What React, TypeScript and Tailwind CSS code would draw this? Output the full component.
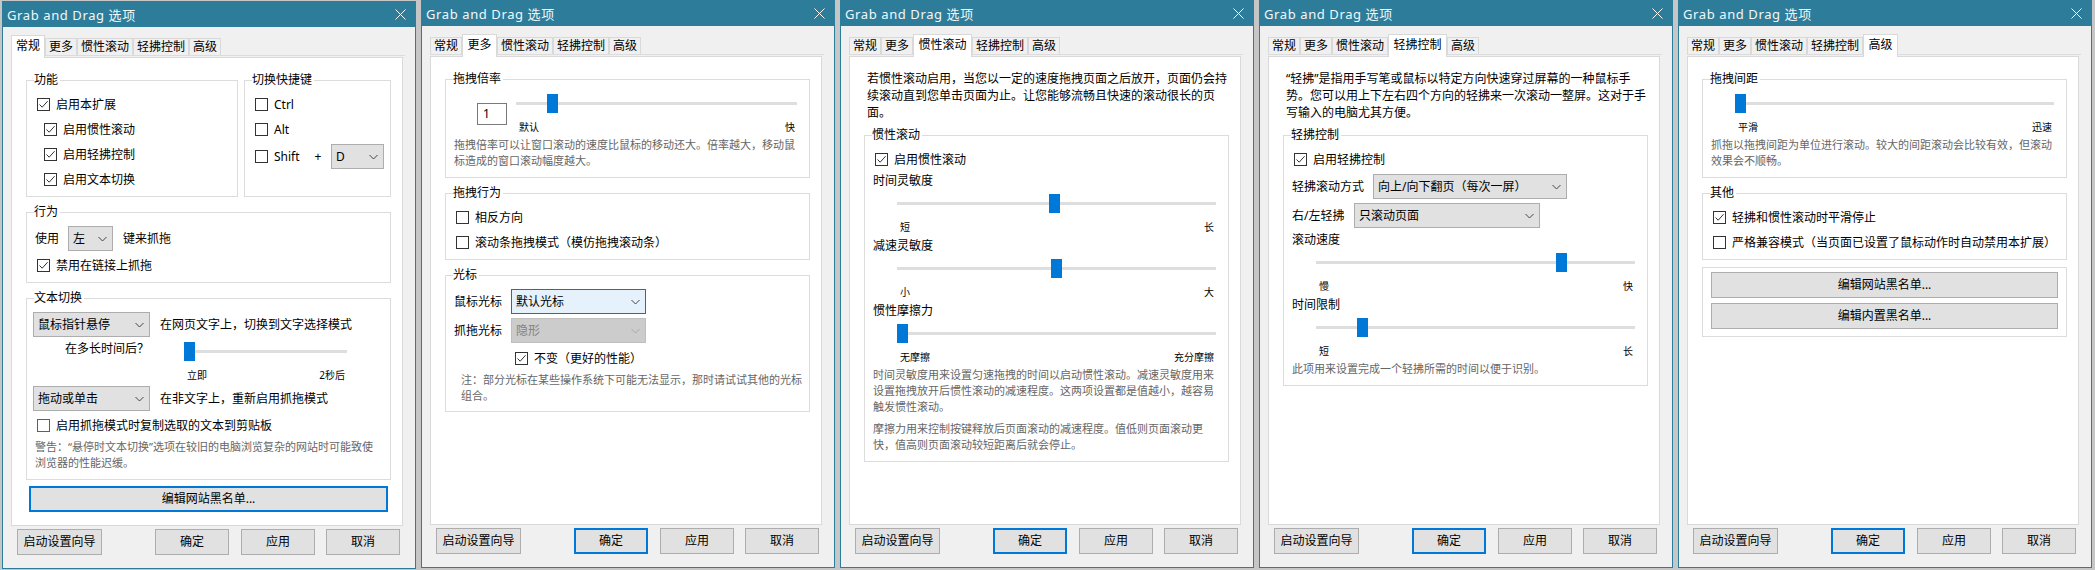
import type { ReactNode } from "react";

const TABS = [
  { name: "常规", width: 32 },
  { name: "更多", width: 32 },
  { name: "惯性滚动", width: 56 },
  { name: "轻拂控制", width: 56 },
  { name: "高级", width: 32 },
];

function CheckBox({ label, checked, focus, className = "" }: { label: string; checked?: boolean; focus?: boolean; className?: string }) {
  return (
    <div className={`flex items-center ${className}`}>
      <span className={`flex h-[13px] w-[13px] flex-none items-center justify-center border bg-white ${focus ? "border-[#0078d7]" : "border-[#333333]"}`}>
        {checked && (
          <svg width="11" height="11" viewBox="0 0 11 11" fill="none">
            <path d="M1.5 5.5 L4.2 8.2 L9.6 2.2" stroke="#333333" strokeWidth="1" />
          </svg>
        )}
      </span>
      <span className="ml-[6px] whitespace-nowrap leading-[16px]">{label}</span>
    </div>
  );
}

function Select({ value, width, disabled, focus }: { value: string; width: string; disabled?: boolean; focus?: boolean }) {
  let look = "border-[#adadad] bg-[#e1e1e1]";
  if (disabled) look = "border-[#bfbfbf] bg-[#cccccc] text-[#838383]";
  if (focus) look = "border-[#0078d7] bg-[#e5f1fb]";
  return (
    <div className={`flex h-[25px] flex-none items-center justify-between border pl-[4px] pr-[5px] ${width} ${look}`}>
      <span className="whitespace-nowrap leading-[16px]">{value}</span>
      <svg width="9" height="6" viewBox="0 0 9 6" fill="none">
        <path d="M0.5 1 L4.5 5 L8.5 1" stroke={disabled ? "#a8a8a8" : "#444444"} strokeWidth="1" />
      </svg>
    </div>
  );
}

function Slider({ width, thumb, min, max }: { width: number; thumb: number; min: string; max: string }) {
  return (
    <div className="flex-none" style={{ width }}>
      <div className="relative h-[19px]">
        <div className="absolute left-0 right-0 top-[8px] h-[3px] bg-[#dedede]" />
        <div className="absolute top-0 h-[19px] w-[11px] bg-[#0078d7]" style={{ left: thumb }} />
      </div>
      <div className="mt-[7px] flex h-[14px] items-center justify-between pl-[3px] pr-[2px] text-[10px] leading-[14px]">
        <span>{min}</span>
        <span>{max}</span>
      </div>
    </div>
  );
}

function Group({ title, className = "", children }: { title?: string; className?: string; children: ReactNode }) {
  return (
    <div className={`relative border border-[#dcdcdc] ${className}`}>
      {title && <span className="absolute -top-[9px] left-[7px] bg-white pr-[2px] leading-[16px]">{title}</span>}
      {children}
    </div>
  );
}

function Note({ className = "", children }: { className?: string; children: ReactNode }) {
  return <p className={`pl-[7px] text-[11px] leading-[16px] text-[#666666] ${className}`}>{children}</p>;
}

function PushButton({ label, className = "", primary }: { label: string; className?: string; primary?: boolean }) {
  return (
    <div className={`flex h-[26px] flex-none items-center justify-center bg-[#e1e1e1] leading-[16px] ${primary ? "border-2 border-[#0078d7]" : "border border-[#adadad]"} ${className}`}>
      {label}
    </div>
  );
}

function Dialog({ tab, first, children }: { tab: number; first?: boolean; children: ReactNode }) {
  return (
    <section className={`h-[568px] w-[414px] flex-none border border-[#2d7d9a] bg-[#f0f0f0] ${first ? "mt-[1px]" : ""}`}>
      <header className="flex h-[25px] items-center justify-between bg-[#2d7d9a] pl-[4px] pr-[9px] text-[13px] leading-[18px] tracking-[0.6px] text-[#f2f7f9]">
        <span>Grab and Drag 选项</span>
        <svg width="11" height="11" viewBox="0 0 11 11" fill="none">
          <path d="M0.5 0.5 L10.5 10.5 M10.5 0.5 L0.5 10.5" stroke="#ffffff" strokeWidth="1" />
        </svg>
      </header>
      <div className="ml-[8px] flex h-[29px] w-[394px] items-end border-b border-[#dcdcdc]">
        {TABS.map((t, i) =>
          i === tab ? (
            <div
              key={t.name}
              className="relative z-10 -mb-[3px] flex h-[23px] items-center justify-center border border-b-0 border-[#d9d9d9] bg-white pb-[2px]"
              style={{ width: t.width + (i === 0 ? 2 : 3) }}
            >
              {t.name}
            </div>
          ) : (
            <div
              key={t.name}
              className="flex h-[17px] items-center justify-center border border-b-0 border-[#d9d9d9] bg-[#f0f0f0]"
              style={{ width: t.width }}
            >
              {t.name}
            </div>
          )
        )}
      </div>
      <div className="ml-[8px] mt-[1px] h-[469px] w-[392px] border border-[#d9d9d9] bg-white pl-[14px] pr-[11px]">{children}</div>
      <div className="mt-[3px] flex pl-[14px]">
        <PushButton label="启动设置向导" className="w-[85px]" />
        <PushButton label="确定" className="ml-[53px] w-[74px]" primary={!first} />
        <PushButton label="应用" className="ml-[12px] w-[74px]" />
        <PushButton label="取消" className="ml-[11px] w-[74px]" />
      </div>
    </section>
  );
}

function GeneralTab() {
  return (
    <Dialog tab={0} first>
      <div className="mt-[22px] flex gap-[6px]">
        <Group title="功能" className="h-[117px] w-[212px] pl-[10px] pt-[11px]">
          <CheckBox label="启用本扩展" checked className="h-[25px]" />
          <CheckBox label="启用惯性滚动" checked className="ml-[7px] h-[25px]" />
          <CheckBox label="启用轻拂控制" checked className="ml-[7px] h-[25px]" />
          <CheckBox label="启用文本切换" checked className="ml-[7px] h-[25px]" />
        </Group>
        <Group title="切换快捷键" className="h-[117px] w-[147px] pl-[10px] pt-[11px]">
          <CheckBox label="Ctrl" className="h-[25px]" />
          <CheckBox label="Alt" className="h-[25px]" />
          <div className="mt-[2px] flex h-[25px] items-center">
            <CheckBox label="Shift" className="w-[59px]" />
            <span className="w-[8px] text-center">+</span>
            <div className="ml-[9px]">
              <Select value="D" width="w-[53px]" />
            </div>
          </div>
        </Group>
      </div>
      <Group title="行为" className="mt-[15px] h-[71px] pl-[8px] pt-[13px]">
        <div className="flex h-[25px] items-center">
          <span className="w-[33px]">使用</span>
          <Select value="左" width="w-[45px]" />
          <span className="ml-[10px]">键来抓拖</span>
        </div>
        <CheckBox label="禁用在链接上抓拖" checked className="ml-[2px] mt-[8px] h-[13px]" />
      </Group>
      <Group title="文本切换" className="mt-[15px] h-[182px] pt-[13px]">
        <div className="flex h-[25px] items-center pl-[6px]">
          <Select value="鼠标指针悬停" width="w-[117px]" />
          <span className="ml-[10px]">在网页文字上，切换到文字选择模式</span>
        </div>
        <div className="mt-[5px] flex items-start">
          <span className="w-[157px] pl-[38px] leading-[14px]">在多长时间后？</span>
          <Slider width={163} thumb={0} min="立即" max="2秒后" />
        </div>
        <div className="mt-[4px] flex h-[25px] items-center pl-[6px]">
          <Select value="拖动或单击" width="w-[117px]" />
          <span className="ml-[10px]">在非文字上，重新启用抓拖模式</span>
        </div>
        <CheckBox label="启用抓拖模式时复制选取的文本到剪贴板" focus className="ml-[10px] mt-[8px] h-[13px]" />
        <Note className="mt-[7px] pl-[8px]">
          警告：“悬停时文本切换”选项在较旧的电脑浏览复杂的网站时可能致使
          <br />
          浏览器的性能迟缓。
        </Note>
      </Group>
      <PushButton label="编辑网站黑名单..." className="ml-[3px] mt-[6px] w-[359px]" primary />
    </Dialog>
  );
}

function MoreTab() {
  return (
    <Dialog tab={1}>
      <Group title="拖拽倍率" className="mt-[22px] h-[99px]">
        <div className="flex items-start pl-[31px] pt-[14px]">
          <div className="mt-[9px] flex h-[22px] w-[30px] flex-none items-center border border-[#7a7a7a] pl-[5px]">1</div>
          <div className="ml-[9px]">
            <Slider width={281} thumb={31} min="默认" max="快" />
          </div>
        </div>
        <Note className="mt-[3px] pl-[8px]">
          拖拽倍率可以让窗口滚动的速度比鼠标的移动还大。倍率越大，移动鼠
          <br />
          标造成的窗口滚动幅度越大。
        </Note>
      </Group>
      <Group title="拖拽行为" className="mt-[15px] h-[67px] pl-[10px] pt-[11px]">
        <CheckBox label="相反方向" className="h-[25px]" />
        <CheckBox label="滚动条拖拽模式（模仿拖拽滚动条）" className="h-[25px]" />
      </Group>
      <Group title="光标" className="mt-[15px] h-[137px] pl-[8px] pt-[13px]">
        <div className="flex h-[25px] items-center">
          <span className="w-[57px]">鼠标光标</span>
          <Select value="默认光标" width="w-[135px]" focus />
        </div>
        <div className="mt-[4px] flex h-[25px] items-center">
          <span className="w-[57px]">抓拖光标</span>
          <Select value="隐形" width="w-[135px]" disabled />
        </div>
        <CheckBox label="不变（更好的性能）" checked className="ml-[61px] mt-[9px] h-[13px]" />
        <Note className="mt-[7px] pl-0">
          注：部分光标在某些操作系统下可能无法显示，那时请试试其他的光标
          <br />
          组合。
        </Note>
      </Group>
    </Dialog>
  );
}

function InertiaTab() {
  return (
    <Dialog tab={2}>
      <p className="mt-[13px] pl-[3px] leading-[17px]">
        若惯性滚动启用，当您以一定的速度拖拽页面之后放开，页面仍会持
        <br />
        续滚动直到您单击页面为止。让您能够流畅且快速的滚动很长的页
        <br />
        面。
      </p>
      <Group title="惯性滚动" className="mt-[14px] h-[327px] pt-[17px]">
        <CheckBox label="启用惯性滚动" checked className="ml-[10px] h-[13px]" />
        <p className="mt-[7px] pl-[8px] leading-[16px]">时间灵敏度</p>
        <div className="mt-[5px] pl-[32px]">
          <Slider width={319} thumb={152} min="短" max="长" />
        </div>
        <p className="mt-[4px] pl-[8px] leading-[16px]">减速灵敏度</p>
        <div className="mt-[5px] pl-[32px]">
          <Slider width={319} thumb={154} min="小" max="大" />
        </div>
        <p className="mt-[4px] pl-[8px] leading-[16px]">惯性摩擦力</p>
        <div className="mt-[5px] pl-[32px]">
          <Slider width={319} thumb={0} min="无摩擦" max="充分摩擦" />
        </div>
        <Note className="mt-[3px] pl-[8px]">
          时间灵敏度用来设置匀速拖拽的时间以启动惯性滚动。减速灵敏度用来
          <br />
          设置拖拽放开后惯性滚动的减速程度。这两项设置都是值越小，越容易
          <br />
          触发惯性滚动。
        </Note>
        <Note className="mt-[6px] pl-[8px]">
          摩擦力用来控制按键释放后页面滚动的减速程度。值低则页面滚动更
          <br />
          快，值高则页面滚动较短距离后就会停止。
        </Note>
      </Group>
    </Dialog>
  );
}

function FlickTab() {
  return (
    <Dialog tab={3}>
      <p className="mt-[13px] pl-[3px] leading-[17px]">
        “轻拂”是指用手写笔或鼠标以特定方向快速穿过屏幕的一种鼠标手
        <br />
        势。您可以用上下左右四个方向的轻拂来一次滚动一整屏。这对于手
        <br />
        写输入的电脑尤其方便。
      </p>
      <Group title="轻拂控制" className="mt-[14px] h-[251px] pt-[17px]">
        <CheckBox label="启用轻拂控制" checked className="ml-[10px] h-[13px]" />
        <div className="mt-[8px] flex h-[25px] items-center pl-[8px]">
          <span className="w-[81px]">轻拂滚动方式</span>
          <Select value="向上/向下翻页（每次一屏）" width="w-[194px]" />
        </div>
        <div className="mt-[4px] flex h-[25px] items-center pl-[8px]">
          <span className="w-[62px]">右/左轻拂</span>
          <Select value="只滚动页面" width="w-[186px]" />
        </div>
        <p className="mt-[4px] pl-[8px] leading-[16px]">滚动速度</p>
        <div className="mt-[5px] pl-[32px]">
          <Slider width={319} thumb={240} min="慢" max="快" />
        </div>
        <p className="mt-[4px] pl-[8px] leading-[16px]">时间限制</p>
        <div className="mt-[5px] pl-[32px]">
          <Slider width={319} thumb={41} min="短" max="长" />
        </div>
        <Note className="mt-[3px] pl-[8px]">此项用来设置完成一个轻拂所需的时间以便于识别。</Note>
      </Group>
    </Dialog>
  );
}

function AdvancedTab() {
  return (
    <Dialog tab={4}>
      <Group title="拖拽间距" className="mt-[22px] h-[99px] pt-[14px]">
        <div className="pl-[32px]">
          <Slider width={319} thumb={0} min="平滑" max="迅速" />
        </div>
        <Note className="mt-[3px] pl-[8px]">
          抓拖以拖拽间距为单位进行滚动。较大的间距滚动会比较有效，但滚动
          <br />
          效果会不顺畅。
        </Note>
      </Group>
      <Group title="其他" className="mt-[15px] h-[67px] pl-[10px] pt-[11px]">
        <CheckBox label="轻拂和惯性滚动时平滑停止" checked className="h-[25px]" />
        <CheckBox label="严格兼容模式（当页面已设置了鼠标动作时自动禁用本扩展）" className="h-[25px]" />
      </Group>
      <Group className="mt-[7px] h-[70px] pl-[8px] pt-[4px]">
        <PushButton label="编辑网站黑名单..." className="w-[347px]" />
        <PushButton label="编辑内置黑名单..." className="mt-[5px] w-[347px]" />
      </Group>
    </Dialog>
  );
}

export default function App() {
  return (
    <main className="flex h-[570px] w-[2095px] gap-[5px] overflow-hidden bg-[#c6c6c6] pl-[2px] font-['Noto_Sans','Noto_Sans_CJK_SC',sans-serif] text-[12px] text-black">
      <GeneralTab />
      <MoreTab />
      <InertiaTab />
      <FlickTab />
      <AdvancedTab />
    </main>
  );
}
